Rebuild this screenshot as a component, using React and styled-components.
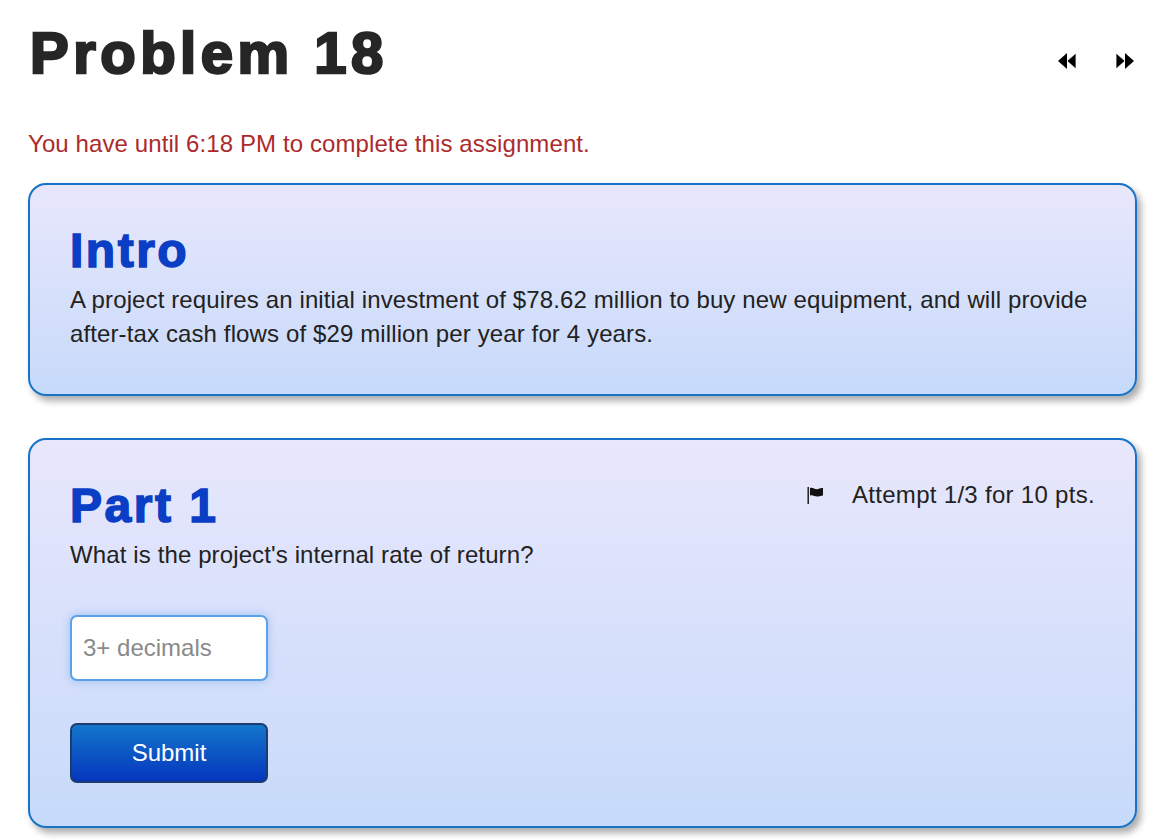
import styled, { createGlobalStyle } from "styled-components";

const GlobalStyle = createGlobalStyle`
  html, body {
    margin: 0;
    padding: 0;
    background: #ffffff;
  }
  body {
    font-family: "Liberation Sans", Helvetica, Arial, sans-serif;
    color: #222222;
  }
`;

const Page = styled.div`
  width: 1166px;
  box-sizing: border-box;
  padding: 24px 29px 40px 28px;
`;

const Header = styled.div`
  display: flex;
  justify-content: space-between;
  align-items: flex-start;
`;

const Title = styled.h1`
  margin: 0 0 0 2px;
  font-size: 58px;
  line-height: 58px;
  font-weight: bold;
  letter-spacing: 4.5px;
  color: #262626;
  -webkit-text-stroke: 2.5px #262626;
`;

const Nav = styled.div`
  display: flex;
  gap: 40px;
  margin: 28px 3px 0 0;
`;

const NavButton = styled.button`
  border: none;
  background: none;
  padding: 0;
  width: 18px;
  height: 18px;
  cursor: pointer;
  display: flex;
`;

const Deadline = styled.p`
  margin: 48px 0 25px;
  font-size: 24px;
  line-height: 28px;
  letter-spacing: 0.1px;
  color: #ad2a2c;
`;

const Card = styled.section`
  border: 2px solid #1673c6;
  border-radius: 18px;
  background: linear-gradient(to bottom, #e8e7fc, #c7dafa);
  box-shadow: 4px 5px 7px rgba(0, 0, 0, 0.33);
  padding: 38px 40px 43px;
  margin-bottom: 42px;
`;

const CardHead = styled.div`
  display: flex;
  justify-content: space-between;
  align-items: flex-start;
`;

const Heading = styled.h2`
  margin: 0 0 4px;
  font-size: 48px;
  line-height: 56px;
  font-weight: bold;
  letter-spacing: 2.5px;
  color: #0a3ec4;
  -webkit-text-stroke: 1.5px #0a3ec4;
`;

const Text = styled.p`
  margin: 0;
  font-size: 24px;
  line-height: 34px;
  letter-spacing: 0.12px;
  color: #222222;
`;

const Attempt = styled.div`
  display: flex;
  align-items: center;
  gap: 28px;
  font-size: 24px;
  line-height: 34px;
  letter-spacing: 0.3px;
  color: #222222;
`;

const Answer = styled.input`
  display: block;
  box-sizing: border-box;
  width: 198px;
  height: 66px;
  margin-top: 43px;
  padding: 0 11px;
  border: 2px solid #5ba1e8;
  border-radius: 7px;
  background: #ffffff;
  box-shadow: 0 0 9px rgba(90, 150, 235, 0.45);
  font-family: inherit;
  font-size: 24px;
  color: #222222;
  outline: none;
  &::placeholder {
    color: #8a8a8a;
  }
`;

const Submit = styled.button`
  display: block;
  box-sizing: border-box;
  width: 198px;
  height: 60px;
  margin-top: 42px;
  border: 2px solid #1c3b6e;
  border-radius: 7px;
  background: linear-gradient(to bottom, #1476ca, #0536be);
  color: #ffffff;
  font-family: inherit;
  font-size: 24px;
  cursor: pointer;
`;

const Rewind = () => (
  <svg width="18" height="18" viewBox="0 0 18 18">
    <polygon points="9,1 0,9 9,17" fill="#000" />
    <polygon points="18,1 9,9 18,17" fill="#000" stroke="#fff" strokeWidth="0.8" />
  </svg>
);

const Forward = () => (
  <svg width="18" height="18" viewBox="0 0 18 18">
    <polygon points="9,1 18,9 9,17" fill="#000" />
    <polygon points="0,1 9,9 0,17" fill="#000" stroke="#fff" strokeWidth="0.8" />
  </svg>
);

const Flag = () => (
  <svg width="17" height="17" viewBox="0 0 17 17">
    <rect x="0.5" y="0" width="1.4" height="17" fill="#111" />
    <path d="M3 1 C6 0 8 3 11 2 C13 1.4 14.5 1 16 1 L16 8.5 C14 8.5 13 9.5 11 9.5 C8 10 6 7.5 3 8.5 Z" fill="#111" />
  </svg>
);

export default function App() {
  return (
    <>
      <GlobalStyle />
      <Page>
        <Header>
          <Title>Problem 18</Title>
          <Nav>
            <NavButton aria-label="Previous problem">
              <Rewind />
            </NavButton>
            <NavButton aria-label="Next problem">
              <Forward />
            </NavButton>
          </Nav>
        </Header>
        <Deadline>You have until 6:18 PM to complete this assignment.</Deadline>

        <Card>
          <Heading>Intro</Heading>
          <Text>
            A project requires an initial investment of $78.62 million to buy new
            equipment, and will provide after-tax cash flows of $29 million per
            year for 4 years.
          </Text>
        </Card>

        <Card>
          <CardHead>
            <Heading>Part 1</Heading>
            <Attempt>
              <Flag />
              Attempt 1/3 for 10 pts.
            </Attempt>
          </CardHead>
          <Text>What is the project's internal rate of return?</Text>
          <Answer type="text" placeholder="3+ decimals" />
          <Submit type="button">Submit</Submit>
        </Card>
      </Page>
    </>
  );
}
